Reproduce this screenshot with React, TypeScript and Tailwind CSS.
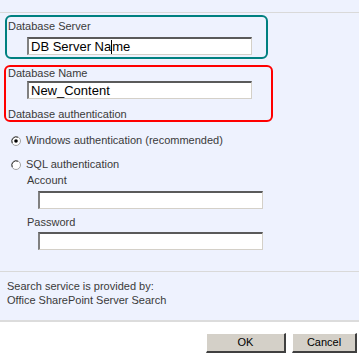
import React from 'react';

const Inset: React.FC<{ className?: string; children?: React.ReactNode }> = ({ className = '', children }) => (
  <div
    className={`h-[18px] bg-white border-t-2 border-l-2 border-r border-b border-t-[#5a5a5a] border-l-[#808080] border-r-[#d4d0c8] border-b-[#d4d0c8] flex items-center pl-[2px] text-[13px] text-black ${className}`}
  >
    {children}
  </div>
);

const Radio: React.FC<{ checked?: boolean }> = ({ checked }) => (
  <svg width="10" height="10" viewBox="0 0 10 10" className="shrink-0">
    <circle cx="5" cy="5" r="4.5" fill="#ffffff" stroke="#a0a0a0" />
    <path d="M1.3 7 A4.3 4.3 0 0 1 7 1.3" fill="none" stroke="#404040" strokeWidth="1" />
    {checked && <circle cx="5" cy="5" r="1.8" fill="#000000" />}
  </svg>
);

const App: React.FC = () => {
  return (
    <div className="w-[359px] h-[358px] bg-white font-['Liberation_Sans',Arial,sans-serif] text-[11px] text-[#3a3a3a] overflow-hidden">
      <div className="h-[322px] bg-[#eef2fe] border-b-2 border-[#dcdcdc] flex flex-col">
        <div className="h-[12px]" />
        <div className="h-px bg-[#d9d9d9]" />

        {/* server */}
        <div className="ml-[5px] mt-[2px] w-[263px] h-[44px] border-2 border-[#008080] rounded-[6px] flex flex-col">
          <div className="pl-[1px] pt-[3px] leading-[13px]">Database Server</div>
          <Inset className="ml-[20px] mt-[4px] w-[225px]">
            DB Server Na<span className="inline-block w-px h-[14px] bg-black" />me
          </Inset>
        </div>

        {/* name */}
        <div className="ml-[4px] mt-[6px] w-[269px] h-[57px] border-2 border-[#ff0000] rounded-[6px] flex flex-col">
          <div className="pl-[2px] leading-[12px]">Database Name</div>
          <Inset className="ml-[21px] mt-[2px] w-[225px]">New_Content</Inset>
          <div className="pl-[2px] mt-[9px] leading-[12px]">Database authentication</div>
        </div>

        <div className="ml-[11px] mt-[12px] flex items-center gap-[5px] h-[13px]">
          <Radio checked />
          <span>Windows authentication (recommended)</span>
        </div>
        <div className="ml-[11px] mt-[11px] flex items-center gap-[5px] h-[13px]">
          <Radio />
          <span>SQL authentication</span>
        </div>

        <div className="ml-[27px] mt-[3px] flex flex-col">
          <div className="leading-[13px]">Account</div>
          <Inset className="ml-[11px] mt-[4px] w-[225px]" />
          <div className="leading-[13px] mt-[7px]">Password</div>
          <Inset className="ml-[11px] mt-[3px] w-[225px]" />
        </div>

        <div className="mt-[21px] h-px bg-[#d9d9d9]" />
        <div className="pl-[7px] pt-[7px] leading-[14px]">
          <div>Search service is provided by:</div>
          <div>Office SharePoint Server Search</div>
        </div>
      </div>

      <div className="flex justify-end gap-[6px] pr-[2px] mt-[11px]">
        <button className="w-[80px] h-[20px] bg-[#d4d0c8] border-t border-l border-white border-r-2 border-b-2 border-r-[#404040] border-b-[#404040] text-[11px] text-black">
          OK
        </button>
        <button className="w-[65px] h-[20px] bg-[#d4d0c8] border-t border-l border-white border-r-2 border-b-2 border-r-[#404040] border-b-[#404040] text-[11px] text-black">
          Cancel
        </button>
      </div>
    </div>
  );
};

export default App;
